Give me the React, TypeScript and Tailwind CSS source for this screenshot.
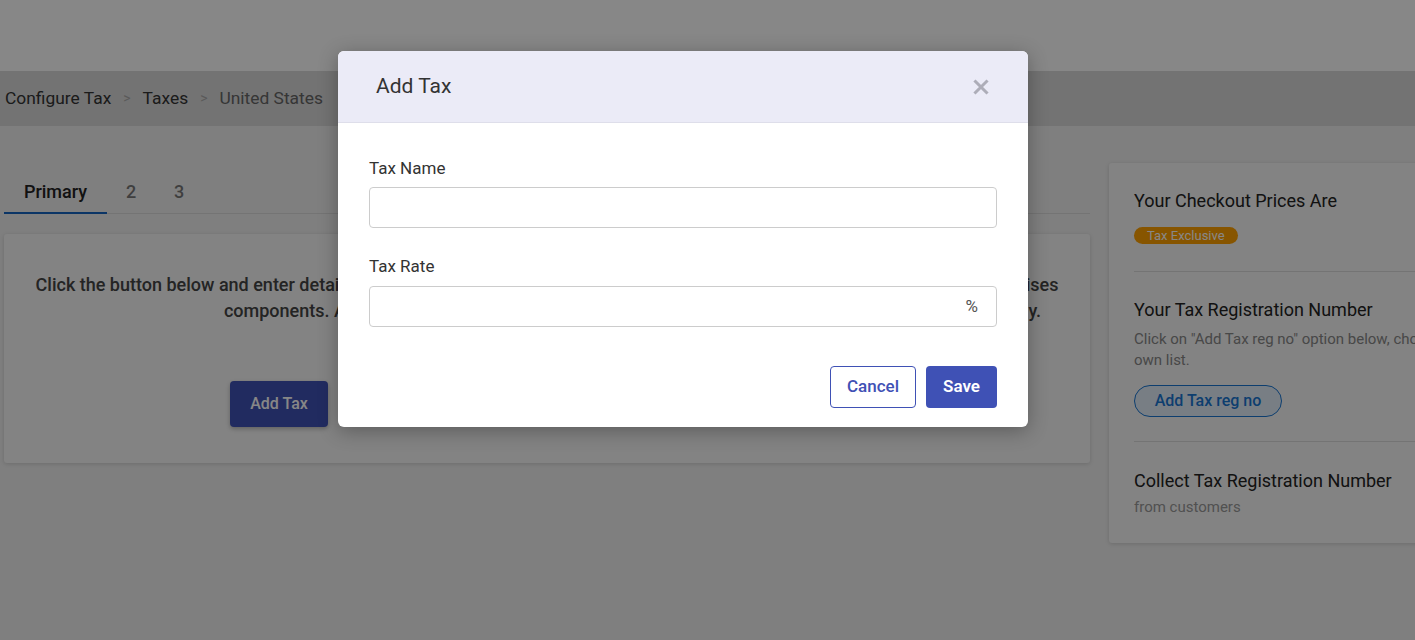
import { useState } from "react";

const tabs = ["Primary", "2", "3"];

export default function App() {
  const [active, setActive] = useState(0);

  return (
    <div className="relative h-[640px] w-[1415px] overflow-hidden bg-[#f0f0f0] font-['Roboto',sans-serif]">
      <header className="h-[71px] bg-white shadow-[0_2px_4px_rgba(0,0,0,0.12)]" />

      <nav className="flex h-[55px] items-center gap-[12px] bg-[#d9d9d9] px-[5px] text-[17.4px]">
        <span className="text-[#333]">Configure Tax</span>
        <span className="text-[14px] text-[#aaa]">&gt;</span>
        <span className="text-[#333]">Taxes</span>
        <span className="text-[14px] text-[#aaa]">&gt;</span>
        <span className="text-[#666]">United States</span>
      </nav>

      <div className="flex gap-[19px] pl-1">
        <section className="w-[1086px] shrink-0 pt-[44px]">
          <div className="flex border-b border-[#dcdcdc]">
            {tabs.map((tab, i) => (
              <button
                key={tab}
                onClick={() => setActive(i)}
                className={`-mb-px h-[44px] border-b-2 text-[18px] font-medium ${
                  i === active
                    ? "w-[103px] border-[#1565c0] text-[#222]"
                    : "w-[48px] border-transparent text-[#777]"
                }`}
              >
                {tab}
              </button>
            ))}
          </div>

          <div className="mt-[20px] h-[229px] rounded-[3px] bg-[#f7f7f7] pt-[38px] shadow-[0_1px_4px_rgba(0,0,0,0.15)]">
            <p className="text-[18px] font-medium leading-[26px] text-[#444]">
              <span className="block text-center">
                Click the button below and enter details of the tax that you'd like to collect. If you want to add a compound tax, which comprises
              </span>
              <span className="block pl-[171px] text-center">
                components. Add each component in the tabs above and the tax will then be calculated automatically.
              </span>
            </p>
            <div className="mt-[57px] pl-[226px]">
              <button className="h-[46px] w-[98px] rounded-[4px] bg-[#3f51b5] text-[16px] font-medium text-white shadow-[0_2px_4px_rgba(0,0,0,0.25)]">
                Add Tax
              </button>
            </div>
          </div>
        </section>

        <aside className="mt-[37px] w-[340px] shrink-0 rounded-[3px] bg-[#f7f7f7] px-[25px] pb-[26px] pt-[27px] shadow-[0_1px_4px_rgba(0,0,0,0.15)]">
          <h3 className="text-[18px] leading-[22px] text-[#222]">Your Checkout Prices Are</h3>
          <span className="mt-[15px] inline-flex h-[17px] items-center rounded-full bg-[#ffa000] px-[13px] text-[13px] text-white">
            Tax Exclusive
          </span>

          <div className="mt-[24px] border-t border-[#dcdcdc] pt-[27px]">
            <h3 className="text-[18px] leading-[22px] text-[#222]">Your Tax Registration Number</h3>
            <p className="mt-[8px] whitespace-nowrap text-[15px] leading-[21px] text-[#888]">
              Click on "Add Tax reg no" option below, choose from the
              <br />
              own list.
            </p>
            <button className="mt-[14px] h-[32px] w-[148px] rounded-full border border-[#1976d2] bg-[#e3eefa] text-[16px] font-medium text-[#1976d2]">
              Add Tax reg no
            </button>
          </div>

          <div className="mt-[24px] border-t border-[#dcdcdc] pt-[28px]">
            <h3 className="text-[18px] leading-[22px] text-[#222]">Collect Tax Registration Number</h3>
            <p className="mt-[5px] text-[15px] leading-[20px] text-[#999]">from customers</p>
          </div>
        </aside>
      </div>

      <div className="absolute inset-0 bg-black/[0.47]" />

      <div className="absolute left-[338px] top-[51px] w-[690px] overflow-hidden rounded-[6px] bg-white shadow-[0_4px_20px_rgba(0,0,0,0.3)]">
        <div className="flex h-[72px] items-center justify-between border-b border-[#dedeea] bg-[#ebebf7] pl-[38px] pr-[39px]">
          <h2 className="text-[21px] text-[#333]">Add Tax</h2>
          <button aria-label="Close" className="text-[#adadb8]">
            <svg width="16" height="16" viewBox="0 0 16 16" fill="none" stroke="currentColor" strokeWidth="3" strokeLinecap="square">
              <path d="M2.5 2.5l11 11M13.5 2.5l-11 11" />
            </svg>
          </button>
        </div>

        <div className="px-[31px] pb-[19px] pt-[35px]">
          <label className="block text-[17px] leading-[20px] text-[#333]">Tax Name</label>
          <input className="mt-[9px] h-[41px] w-full rounded-[4px] border border-[#cccccc] px-3 text-[16px] outline-none" />

          <label className="mt-[28px] block text-[17px] leading-[20px] text-[#333]">Tax Rate</label>
          <div className="mt-[10px] flex h-[41px] items-center rounded-[4px] border border-[#cccccc] pl-3 pr-[18px]">
            <input className="h-full flex-1 text-[16px] outline-none" />
            <span className="text-[17px] text-[#555]">%</span>
          </div>

          <div className="mt-[39px] flex justify-end gap-[10px]">
            <button className="h-[42px] w-[86px] rounded-[4px] border border-[#3f51b5] text-[17px] font-medium text-[#3f51b5]">
              Cancel
            </button>
            <button className="h-[42px] w-[71px] rounded-[4px] bg-[#3f51b5] text-[17px] font-semibold text-white">
              Save
            </button>
          </div>
        </div>
      </div>
    </div>
  );
}
